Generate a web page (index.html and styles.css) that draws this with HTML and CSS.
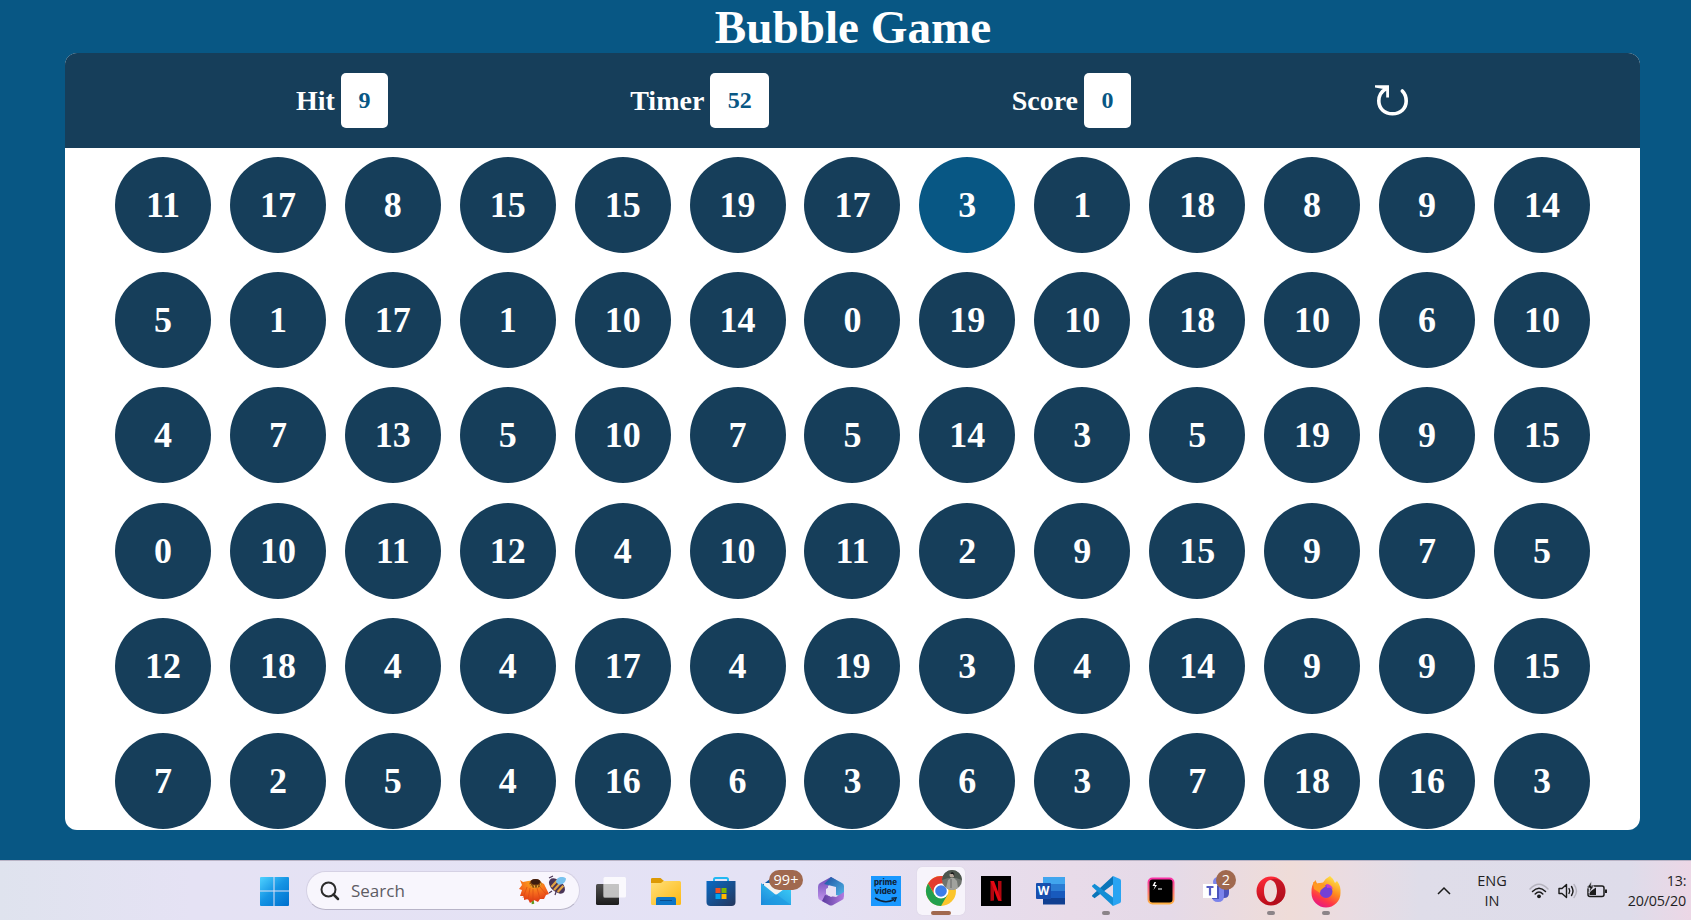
FILE: index.html
```html
<!DOCTYPE html>
<html lang="en">
<head>
<meta charset="utf-8">
<title>Bubble Game</title>
<link rel="stylesheet" href="styles.css">
</head>
<body>
<main class="game">
  <h1 class="title">Bubble Game</h1>
  <section class="panel">
    <header class="bar">
      <div class="stat">Hit <span class="value">9</span></div>
      <div class="stat">Timer <span class="value">52</span></div>
      <div class="stat">Score <span class="value">0</span></div>
      <svg class="reload" viewBox="0 0 34 34"><path d="M11.500 4.500C6 7.500 3.800 12 3.800 17C3.800 24.500 9.500 29.800 17.500 29.800C25.500 29.800 31.200 24.500 31.200 17C31.200 12.500 29.800 9.500 27.300 7" fill="none" stroke="#fff" stroke-width="3.600" stroke-linecap="round"/><path d="M0 1.200H14V13.500H11.200V6.500L8.500 5L0 3.500Z" fill="#fff"/></svg>
    </header>
    <div class="bubbles">
      <b>11</b><b>17</b><b>8</b><b>15</b><b>15</b><b>19</b><b>17</b><b class="hover">3</b><b>1</b><b>18</b><b>8</b><b>9</b><b>14</b>
      <b>5</b><b>1</b><b>17</b><b>1</b><b>10</b><b>14</b><b>0</b><b>19</b><b>10</b><b>18</b><b>10</b><b>6</b><b>10</b>
      <b>4</b><b>7</b><b>13</b><b>5</b><b>10</b><b>7</b><b>5</b><b>14</b><b>3</b><b>5</b><b>19</b><b>9</b><b>15</b>
      <b>0</b><b>10</b><b>11</b><b>12</b><b>4</b><b>10</b><b>11</b><b>2</b><b>9</b><b>15</b><b>9</b><b>7</b><b>5</b>
      <b>12</b><b>18</b><b>4</b><b>4</b><b>17</b><b>4</b><b>19</b><b>3</b><b>4</b><b>14</b><b>9</b><b>9</b><b>15</b>
      <b>7</b><b>2</b><b>5</b><b>4</b><b>16</b><b>6</b><b>3</b><b>6</b><b>3</b><b>7</b><b>18</b><b>16</b><b>3</b>
    </div>
  </section>
</main>
<footer class="taskbar">
  <svg width="0" height="0" class="defs">
    <defs>
      <linearGradient id="win" gradientUnits="userSpaceOnUse" x1="1" y1="1" x2="27" y2="30"><stop offset="0" stop-color="#4fd2ff"/><stop offset=".5" stop-color="#1594e4"/><stop offset="1" stop-color="#0072cf"/></linearGradient>
      <linearGradient id="dark" x1="0" y1="0" x2="0" y2="1"><stop offset="0" stop-color="#505050"/><stop offset="1" stop-color="#1c1c1c"/></linearGradient>
      <linearGradient id="fold" x1="0" y1="0" x2="1" y2="1"><stop offset="0" stop-color="#ffe07a"/><stop offset="1" stop-color="#fdb813"/></linearGradient>
      <linearGradient id="store" x1="0" y1="0" x2="1" y2="1"><stop offset="0" stop-color="#0a6ac4"/><stop offset="1" stop-color="#24365c"/></linearGradient>
      <linearGradient id="mail" x1="0" y1="1" x2="1" y2="0"><stop offset="0" stop-color="#1a86d9"/><stop offset="1" stop-color="#3fd4fa"/></linearGradient>
      <linearGradient id="m1" x1="0" y1="0" x2="0" y2="1"><stop offset="0" stop-color="#6b4bb8"/><stop offset="1" stop-color="#c99af0"/></linearGradient>
      <linearGradient id="m2" x1="0" y1="0" x2="1" y2="1"><stop offset="0" stop-color="#1b4fa0"/><stop offset="1" stop-color="#53b9ea"/></linearGradient>
      <linearGradient id="m3" x1="0" y1="0" x2="1" y2="0"><stop offset="0" stop-color="#5a3c9e"/><stop offset="1" stop-color="#b27be0"/></linearGradient>
      <linearGradient id="term" x1="0" y1="0" x2="0" y2="1"><stop offset="0" stop-color="#fb2fa6"/><stop offset="1" stop-color="#ffb042"/></linearGradient>
      <linearGradient id="op" x1="0" y1="0" x2="0" y2="1"><stop offset="0" stop-color="#ff2b38"/><stop offset="1" stop-color="#b80b19"/></linearGradient>
      <linearGradient id="ff" x1=".8" y1="0" x2=".3" y2="1"><stop offset="0" stop-color="#fff04a"/><stop offset=".45" stop-color="#ff8a1e"/><stop offset=".75" stop-color="#ff3647"/><stop offset="1" stop-color="#e3168a"/></linearGradient>
      <radialGradient id="flower" cx=".5" cy=".1" r=".9"><stop offset="0" stop-color="#ffb01e"/><stop offset=".55" stop-color="#f4661c"/><stop offset="1" stop-color="#dc3212"/></radialGradient>
    </defs>
  </svg>
  <div class="app"><svg viewBox="0 0 30 30"><g fill="url(#win)"><path d="M1 2Q1 1 2 1H14.500V14.500H1Z"/><path d="M15.500 1H29Q30 1 30 2V14.500H15.500Z"/><path d="M1 15.500H14.500V30H2Q1 30 1 29Z"/><path d="M15.500 15.500H30V29Q30 30 29 30H15.500Z"/></g></svg></div>
  <div class="search">
    <svg class="lens" viewBox="0 0 20 20"><circle cx="8.500" cy="8.500" r="7" fill="none" stroke="#2b2b2b" stroke-width="2"/><path d="M13.500 13.500L18 18" stroke="#2b2b2b" stroke-width="2.500" stroke-linecap="round"/></svg>
    <span class="search-text">Search</span>
    <svg class="art" viewBox="0 0 48 32"><path d="M13 22L14 29" stroke="#5e9b1e" stroke-width="2.500"/><path d="M1 5L4 7L9 6L18 5L25 9L30 19L27 20L25 24L21 24L19 27L15 25L11 28L9 24L5 25L5 21L1 21L3 15L0 14L3 10Z" fill="url(#flower)"/><path d="M8 12L4 23M11 13L9 25M14 14V26M18 13L21 24M21 12L27 19" stroke="#d84a14" stroke-width=".7"/><ellipse cx="16.500" cy="8.500" rx="6" ry="4.500" fill="#8b4b13"/><ellipse cx="16.500" cy="6.800" rx="4.500" ry="2.800" fill="#3d1c10"/><path d="M11 9L13 12M15 10L16 13M19 10L18 13M22 8L21 11" stroke="#e8ae35" stroke-width="1"/><g transform="rotate(42 38 11)"><ellipse cx="38" cy="11" rx="9.500" ry="5.800" fill="#4a3557"/><path d="M34.500 6.500V15.500M38.500 6V16M42.500 6.500V15" stroke="#e3a443" stroke-width="2.200"/></g><path d="M37 7C37 2.500 43 0.500 47 3.500C46.500 8 43 10 39.500 9.500Z" fill="#79c3ef"/><path d="M30 3L34 1M33 16L30 18M37 17L36 20" stroke="#4a3557" stroke-width="1.200"/></svg>
  </div>
  <nav class="apps">
    <div class="app"><svg viewBox="0 0 30 30"><rect x="0" y="8" width="23" height="21" rx="1.500" fill="url(#dark)"/><rect x="7.500" y="1" width="22.500" height="20.500" rx="1.500" fill="#fff" fill-opacity=".8"/><path d="M7.500 8H23V21.500H7.500Z" fill="#b4b4b4" fill-opacity=".6"/></svg></div>
    <div class="app"><svg viewBox="0 0 30 30"><path d="M0 3Q0 2 1.500 2H9.500L13 5V10H0Z" fill="#dd9a04"/><path d="M0 7H10L12.500 5H28.500Q30 5 30 6.500V27.500Q30 29 28.500 29H1.500Q0 29 0 27.500Z" fill="url(#fold)"/><path d="M5 29V23Q5 21 7 21H23Q25 21 25 23V29Z" fill="#0c75c7"/><path d="M9 24.500H21" stroke="#084d8d"/></svg></div>
    <div class="app"><svg viewBox="0 0 30 30"><path d="M8 6V3.500Q8 2 9.500 2H20.500Q22 2 22 3.500V6" fill="none" stroke="#22b8f2" stroke-width="2"/><path d="M0.500 5H29.500V26Q29.500 30 25.500 30H4.500Q.5 30 .5 26Z" fill="url(#store)"/><path d="M9.500 12h5v5h-5z" fill="#f25022"/><path d="M15.500 12h5v5h-5z" fill="#7fba00"/><path d="M9.500 18h5v5h-5z" fill="#00a4ef"/><path d="M15.500 18h5v5h-5z" fill="#ffb900"/></svg></div>
    <div class="app"><svg viewBox="0 0 30 30"><path d="M0 10L9 3L30 10V18H0Z" fill="#0a57a5"/><path d="M3 7H27V17L15 22L3 12Z" fill="#f2f2f2"/><path d="M0 7L15 19L30 8V29H0Z" fill="url(#mail)"/><path d="M0 29L15 18L30 29Z" fill="#1c98df" fill-opacity=".6"/></svg><span class="badge wide">99+</span></div>
    <div class="app"><svg viewBox="0 0 30 30"><path d="M15 1L4 7Q2 8 2 11V20Q2 23 4 24L9 27L12 22V10L20 4Z" fill="url(#m1)"/><path d="M15 1L8 8L20 11V19L27 21Q28 19 28 17V10Q28 8 26 7Z" fill="url(#m2)"/><path d="M9 19L6 25L13 29Q15 30 17 29L26 24Q28 23 28 20V16L20 21Z" fill="url(#m3)"/><path d="M15 10L20 13V18L15 21L10 18V13Z" fill="#e6e1f5"/></svg></div>
    <div class="app"><div class="prime"><span>prime</span><span>video</span><svg viewBox="0 0 24 6"><path d="M1 1Q11 7.500 20 2.500M17.500 1.200L22 .8L20.500 4.800" fill="none" stroke="#10243a" stroke-width="1.500"/></svg></div></div>
    <div class="app active"><svg viewBox="0 0 30 30"><circle cx="15" cy="15" r="15" fill="#fbc52d"/><path d="M2 7.500A15 15 0 0 1 28 7.500H15L9 19Z" fill="#e33b2e"/><path d="M2 7.500A15 15 0 0 0 15 30L21.500 18.700L8.500 18.700Z" fill="#229f4e"/><circle cx="15" cy="15" r="7.500" fill="#fff"/><circle cx="15" cy="15" r="5.800" fill="#3b7de9"/></svg>
      <svg class="avatar" viewBox="0 0 20 20"><circle cx="10" cy="10" r="10" fill="#6f746f"/><path d="M0 10A10 10 0 0 1 20 10L14 8H6Z" fill="#4d564e"/><path d="M4 18L6 10L9 8H12L15 11L16 18Q10 22 4 18Z" fill="#a1a29e"/><circle cx="10" cy="5" r="2.500" fill="#b5a69a"/><path d="M8 4Q10 0 12.500 4V7L11 4Z" fill="#17191a"/><path d="M9 9V18" stroke="#666" stroke-width="1"/></svg></div>
    <div class="app"><svg viewBox="0 0 30 30"><path d="M0 0H30V30H0Z" fill="#000"/><path d="M9.500 5H13V24.500L9.500 25Z M17 5H20.500V25L17 24.500Z" fill="#b1060f"/><path d="M9.500 5H13L20.500 25L17 24.500Z" fill="#e50914"/></svg></div>
    <div class="app"><svg viewBox="0 0 30 30"><path d="M7 1H29V8H7Z" fill="#41a5ee"/><path d="M7 8H29V15H7Z" fill="#2b7cd3"/><path d="M7 15H29V22H7Z" fill="#185abd"/><path d="M7 22H29V28.500H7Z" fill="#103f91"/><rect y="7" width="15" height="16" rx="1" fill="#174fae"/><text x="7.500" y="19" class="word">W</text></svg></div>
    <div class="app run"><svg viewBox="0 0 30 30"><path d="M22 0L2 18.500Q0 20 2 21L3.500 22.300L22 8.500Z" fill="#0a75b9"/><path d="M22 30L2 11.500Q0 10 2 9L3.500 7.700L22 21.500Z" fill="#138ed5"/><path d="M22 0L29 3Q30 3.500 30 5V25Q30 26.500 29 27L22 30Z" fill="#29a4f2"/></svg></div>
    <div class="app"><svg viewBox="0 0 30 30"><rect x="2.500" y="2.500" width="25" height="25" rx="4" fill="#000" stroke="url(#term)" stroke-width="2"/><path d="M8.500 6L6.500 10H9L7.500 14L11 9H8.700L10 6Z" fill="#fff"/><path d="M12 13H16" stroke="#ddd" stroke-width="1.200"/></svg></div>
    <div class="app"><svg viewBox="0 0 30 30"><circle cx="17" cy="6" r="5" fill="#7b83eb"/><path d="M20 12H28V17Q28 22 23 22H20Z" fill="#4b53bc"/><path d="M11 10H23V20Q23 26 17 26Q11 26 11 20Z" fill="#7b83eb"/><path d="M15 10H18V23H11Z" fill="#4b53bc"/><rect x="2" y="8" width="14" height="14" fill="#fff"/><path d="M5.500 11H12.500M9 11V19.500" stroke="#545bc3" stroke-width="2.200"/></svg><span class="badge">2</span></div>
    <div class="app run"><svg viewBox="0 0 30 30"><path d="M15 0.500A14.500 14.500 0 1 0 15 29.500A14.500 14.500 0 1 0 15 .5ZM14.500 4C18.500 4 21 9 21 15S18.500 26 14.500 26S8 21 8 15S10.500 4 14.500 4Z" fill="url(#op)" fill-rule="evenodd"/><path d="M14.500 4C19 1.500 25 3 28 9Q31 17 27 23C23 29 17 28 14.500 26C18.500 26 21 21 21 15S18.500 4 14.500 4Z" fill="#a70e1d" fill-opacity=".6"/></svg></div>
    <div class="app run"><svg viewBox="0 0 30 30"><path d="M19 0Q23 3 24 7L26 5Q30 10 29.500 17A14.500 14.500 0 0 1 .5 17Q0 9 4.500 4L6 7.500L12 6.500Q15 2 19 0Z" fill="url(#ff)"/><circle cx="15" cy="15.500" r="6.500" fill="#7540d5"/><path d="M2 6L6 8Q11 6 15 10L11 13Q9 14 9 17L3 13Z" fill="#ff9a22"/><path d="M15 8Q20 8 22 13Q19 11 16 12Z" fill="#c53ad0"/></svg></div>
  </nav>
  <div class="tray">
    <svg class="caret" viewBox="0 0 14 8"><path d="M1 7L7 1L13 7" fill="none" stroke="#1b1b1b" stroke-width="1.500"/></svg>
    <div class="lang">ENG<br>IN</div>
    <svg class="sys" viewBox="0 0 20 16"><g fill="none" stroke-linecap="round" stroke-width="1.500"><path d="M1 6Q10 -3.500 19 6" stroke="#b5b3be"/><path d="M3.500 8.500Q10 1.800 16.500 8.500M6.200 11Q10 7 13.800 11" stroke="#1b1b1b"/></g><circle cx="10" cy="13.300" r="1.900" fill="#1b1b1b"/></svg>
    <svg class="sys" viewBox="0 0 20 16"><g fill="none" stroke="#1b1b1b" stroke-width="1.400" stroke-linecap="round" stroke-linejoin="round"><path d="M1 5.500H4L8.500 1.500V14.500L4 10.500H1Z"/><path d="M11 5.500Q12.500 8 11 10.500M13.500 3.500Q16.500 8 13.500 12.500"/><path d="M16 1.500Q21 8 16 14.500" stroke="#b5b3be"/></g></svg>
    <svg class="sys" viewBox="0 0 20 16"><rect x="1" y="3" width="16" height="10.500" rx="2" fill="none" stroke="#1b1b1b" stroke-width="1.500"/><path d="M18 6.500H20V10H18Z" fill="#1b1b1b"/><path d="M2.500 12V9L9 4.500V12Z" fill="#1b1b1b"/><path d="M4.500 -2L0 5H3L2 10L7 3H4Z" fill="#1b1b1b" stroke="#dedcea" stroke-width=".7"/></svg>
    <div class="clock"><span class="time">13:</span><span>20/05/20</span></div>
  </div>
</footer>
</body>
</html>
```
FILE: styles.css
```css
* { box-sizing: border-box; margin: 0; padding: 0; }
body {
  width: 1691px;
  height: 920px;
  overflow: hidden;
  display: flex;
  flex-direction: column;
  background: #085784;
  font-family: "Liberation Serif", "Times New Roman", serif;
}
svg { display: block; flex: none; overflow: visible; }
.game { height: 860px; flex: none; }
.title {
  height: 53px;
  margin-left: 15px;
  text-align: center;
  color: #fff;
  font-size: 47.200px;
  line-height: 54px;
}
.panel {
  width: 1575px;
  height: 777px;
  margin-left: 65px;
  border-radius: 12px;
  background: #fff;
  overflow: hidden;
}
.bar {
  height: 95px;
  display: flex;
  align-items: center;
  padding-left: 231px;
  gap: 242.300px;
  background: #163e5a;
}
.stat {
  display: flex;
  align-items: center;
  gap: 6px;
  color: #fff;
  font-size: 28px;
  font-weight: bold;
  line-height: 53px;
}
.value {
  height: 55px;
  padding: 0 17.500px;
  border-radius: 5px;
  background: #fff;
  color: #085784;
  font-size: 24px;
  line-height: 54px;
}
.reload { width: 34px; height: 34px; margin-left: 1.500px; }
.bubbles {
  display: grid;
  grid-template-columns: repeat(13, 96px);
  grid-auto-rows: 96px;
  gap: 19.180px 18.920px;
  padding: 9px 0 0 50px;
}
.bubbles b {
  border-radius: 50%;
  background: #163e5a;
  color: #fff;
  font-size: 36px;
  line-height: 97px;
  text-align: center;
}
.bubbles .hover { background: #085784; }
.taskbar {
  height: 60px;
  flex: none;
  display: flex;
  align-items: center;
  padding-left: 246px;
  border-top: 1px solid #b9b4c6;
  background: linear-gradient(90deg, #dfe3ee 0, #e5e2f4 190px, #e4e2f5 800px, #e8dbe9 1070px, #e5dae8 1170px, #efdcd8 1290px, #eadce2 1350px, #dfdde9 1420px, #dedcea 1630px, #ecd7e6 1691px);
  font-family: "Open Sans", "Noto Sans", sans-serif;
}
.taskbar > * { flex: none; }
.defs { position: absolute; }
.app {
  flex: none;
  width: 55px;
  height: 48px;
  position: relative;
  display: flex;
  justify-content: center;
  align-items: center;
}
.app > svg:first-child { width: 30px; height: 30px; }
.search {
  width: 274px;
  height: 39px;
  margin: 0 3px 0 5px;
  padding: 0 12px 0 13px;
  display: flex;
  align-items: center;
  border: 1px solid #d5d1e4;
  border-bottom-color: #b8b4c8;
  border-radius: 20px;
  background: #f8f6fd;
}
.lens { width: 20px; height: 20px; }
.search-text { margin-left: 11px; flex: 1; color: #5d5c64; font-size: 17px; }
.art { width: 48px; height: 32px; }
.apps { display: flex; }
.active::before {
  content: "";
  position: absolute;
  z-index: -1;
  inset: 0 3.500px;
  border-radius: 5px;
  background: #f7f4fb;
  box-shadow: 0 0 1px #c9c3d5;
}
.active { z-index: 1; }
.active::after, .run::after {
  content: "";
  position: absolute;
  left: 17.500px;
  bottom: 0;
  width: 20px;
  height: 4px;
  border-radius: 2px;
  background: #a1694f;
}
.run::after { left: 23.500px; width: 8px; background: #8b8488; }
.avatar { position: absolute; left: 28.500px; top: 3px; width: 20px; height: 20px; }
.badge {
  position: absolute;
  left: 28px;
  top: 3px;
  width: 20px;
  height: 20px;
  border-radius: 10px;
  background: #a0694f;
  color: #fff;
  font-size: 14.500px;
  line-height: 20px;
  text-align: center;
}
.badge.wide { left: 21px; width: 34px; }
.prime {
  width: 30px;
  height: 30px;
  padding-top: 2.500px;
  background: #1a98ff;
  color: #10243a;
  font-family: Inter, sans-serif;
  font-size: 8px;
  font-weight: 800;
  line-height: 9px;
  text-align: center;
}
.prime span { display: block; }
.prime svg { width: 24px; height: 6px; margin: 1px auto 0; }
.word { fill: #fff; font: bold 12px "Open Sans", sans-serif; text-anchor: middle; }
.tray {
  margin-left: 84px;
  display: flex;
  align-items: center;
  color: #1f1f24;
  font-size: 14.500px;
  line-height: 20px;
}
.caret { width: 14px; height: 8px; }
.lang { width: 36px; margin: 0 14px 0 23px; text-align: center; }
.sys { width: 20px; height: 16px; margin: 0 4.700px; }
.clock { margin-left: 15.500px; display: flex; flex-direction: column; font-size: 14.300px; letter-spacing: -.15px; }
.time { margin-left: 39px; }
```
